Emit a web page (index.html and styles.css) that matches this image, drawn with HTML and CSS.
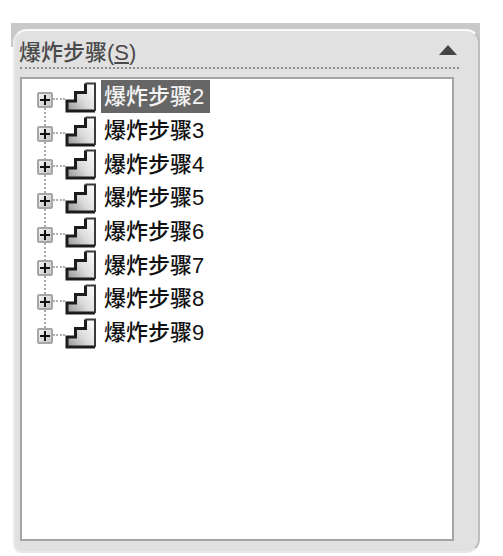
FILE: index.html
```html
<!DOCTYPE html>
<html lang="zh-CN">
<head>
    <meta charset="UTF-8">
    <meta name="viewport" content="width=device-width, initial-scale=1.0">
    <title>爆炸步骤</title>
    <link rel="stylesheet" href="styles.css">
</head>
<body>
    <svg class="defs" width="0" height="0">
        <defs>
            <linearGradient id="stepFill" x1="0" y1="1" x2="1" y2="0.25">
                <stop offset="0.1" stop-color="#a0a0a0"/>
                <stop offset="0.55" stop-color="#dcdcdc"/>
                <stop offset="1" stop-color="#f8f8f8"/>
            </linearGradient>
            <symbol id="steps" viewBox="0 0 32 32">
                <path d="M20.5 2.5H30V30H2V20H10.5V11.5H20.5Z" fill="url(#stepFill)"/>
                <path d="M30 30H2V20H10.5V11.5H20.5V2.5" fill="none" stroke="#1c1c1c" stroke-width="3"/>
                <path d="M20.5 2.5H30V30" fill="none" stroke="#3a3a3a" stroke-width="2"/>
            </symbol>
        </defs>
    </svg>

    <div class="band">
        <section class="panel">
            <header class="panel-head">
                <span class="panel-title">爆炸步骤(<u>S</u>)</span>
                <span class="collapse-arrow"></span>
            </header>
            <div class="tree">
                <div class="row">
                    <span class="expander"></span><span class="branch"></span>
                    <svg class="step-icon"><use href="#steps"/></svg>
                    <span class="label selected">爆炸步骤2</span>
                </div>
                <div class="row">
                    <span class="expander"></span><span class="branch"></span>
                    <svg class="step-icon"><use href="#steps"/></svg>
                    <span class="label">爆炸步骤3</span>
                </div>
                <div class="row">
                    <span class="expander"></span><span class="branch"></span>
                    <svg class="step-icon"><use href="#steps"/></svg>
                    <span class="label">爆炸步骤4</span>
                </div>
                <div class="row">
                    <span class="expander"></span><span class="branch"></span>
                    <svg class="step-icon"><use href="#steps"/></svg>
                    <span class="label">爆炸步骤5</span>
                </div>
                <div class="row">
                    <span class="expander"></span><span class="branch"></span>
                    <svg class="step-icon"><use href="#steps"/></svg>
                    <span class="label">爆炸步骤6</span>
                </div>
                <div class="row">
                    <span class="expander"></span><span class="branch"></span>
                    <svg class="step-icon"><use href="#steps"/></svg>
                    <span class="label">爆炸步骤7</span>
                </div>
                <div class="row">
                    <span class="expander"></span><span class="branch"></span>
                    <svg class="step-icon"><use href="#steps"/></svg>
                    <span class="label">爆炸步骤8</span>
                </div>
                <div class="row">
                    <span class="expander"></span><span class="branch"></span>
                    <svg class="step-icon"><use href="#steps"/></svg>
                    <span class="label">爆炸步骤9</span>
                </div>
            </div>
        </section>
    </div>
</body>
</html>
```

FILE: styles.css
```css
/* Page */
html, body {
    height: 100%;
}

body {
    margin: 0;
    padding: 23px 23px 3px 11px;
    box-sizing: border-box;
    background: #ffffff;
    font-family: "Liberation Sans", "Noto Sans CJK SC", sans-serif;
    color: #222;
}

.defs {
    position: absolute;
}

/* Panel */
.band {
    height: 530px;
    padding: 6px 0 0 2px;
    box-sizing: border-box;
    background: linear-gradient(to bottom, #c9c9c9 24px, #ffffff 24px);
}

.panel {
    height: 524px;
    box-sizing: border-box;
    display: flex;
    flex-direction: column;
    padding: 0 24px 10px 5px;
    background: #e1e1e1;
    border-top: 2px solid #fafafa;
    border-right: 2px solid #bdbdbd;
    border-left: 2px solid #ececec;
    border-bottom: 2px solid #e8e8e8;
    border-radius: 14px;
    border-bottom-left-radius: 8px;
}

.panel-head {
    height: 36px;
    flex: none;
    display: flex;
    align-items: center;
    justify-content: space-between;
    margin: 0 -5px 8px 0;
    border-bottom: 2px dotted #8c8c8c;
}

.panel-title {
    font-size: 22px;
    font-weight: 500;
    color: #4a4a4a;
    margin: 1px 0 0 -1px;
}

.collapse-arrow {
    width: 0;
    height: 0;
    margin: 2px 2px 0 0;
    border-left: 9px solid transparent;
    border-right: 9px solid transparent;
    border-bottom: 10px solid #444;
}

/* Tree */
.tree {
    flex: 1;
    padding-top: 1px;
    background: #ffffff;
    border: 2px solid #a4a4a4;
}

.row {
    position: relative;
    height: 33.7px;
    display: flex;
    align-items: center;
    padding-left: 15px;
}

/* vertical dotted line joining the expanders */
.row::after {
    content: "";
    position: absolute;
    left: 22px;
    top: 28px;
    height: 18px;
    border-left: 2px dotted #a8a8a8;
}

.row:last-child::after {
    display: none;
}

.expander {
    position: relative;
    flex: none;
    width: 16px;
    height: 16px;
    margin-top: 6px;
    box-sizing: border-box;
    background: linear-gradient(135deg, #f4f4f4, #c4c4c4);
    border: 2px solid #a6a6a6;
    border-radius: 2px;
}

.expander::before,
.expander::after {
    content: "";
    position: absolute;
    background: #111;
}

.expander::before {
    left: 1px;
    top: 5px;
    width: 10px;
    height: 2px;
}

.expander::after {
    left: 5px;
    top: 1px;
    width: 2px;
    height: 10px;
}

.branch {
    flex: none;
    width: 12px;
    margin-top: 4px;
    border-top: 2px dotted #b0b0b0;
}

.step-icon {
    flex: none;
    width: 32px;
    height: 32px;
}

.label {
    margin-left: 4px;
    padding: 0 6px 0 3px;
    height: 33px;
    line-height: 33px;
    font-size: 22px;
    font-weight: 500;
    white-space: nowrap;
    color: #111;
}

.label.selected {
    background: #666666;
    color: #f4f4f4;
}
```
